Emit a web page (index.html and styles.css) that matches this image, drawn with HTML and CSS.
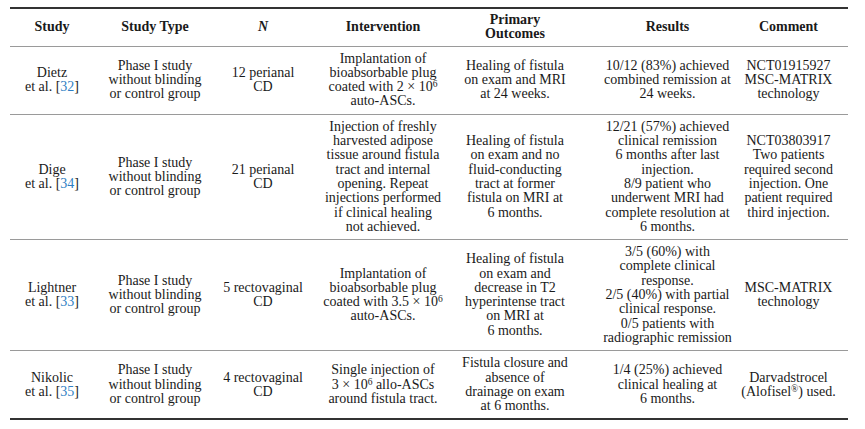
FILE: index.html
```html
<!DOCTYPE html>
<html lang="en">
<head>
<meta charset="utf-8">
<title>Table</title>
<link rel="stylesheet" href="styles.css">
</head>
<body>
<table class="tbl">
  <colgroup>
    <col class="c1"><col class="c2"><col class="c3"><col class="c4"><col class="c5"><col class="c6"><col class="c7">
  </colgroup>
  <thead>
    <tr>
      <th>Study</th>
      <th>Study Type</th>
      <th><em>N</em></th>
      <th>Intervention</th>
      <th>Primary<br>Outcomes</th>
      <th class="res">Results</th>
      <th class="last">Comment</th>
    </tr>
  </thead>
  <tbody>
    <tr>
      <td>Dietz<br>et al. [<a class="ref">32</a>]</td>
      <td>Phase I study<br>without blinding<br>or control group</td>
      <td>12 perianal<br>CD</td>
      <td>Implantation of<br>bioabsorbable plug<br>coated with 2 × 10<sup>6</sup><br>auto-ASCs.</td>
      <td>Healing of fistula<br>on exam and MRI<br>at 24 weeks.</td>
      <td class="res">10/12 (83%) achieved<br>combined remission at<br>24 weeks.</td>
      <td class="last">NCT01915927<br>MSC-MATRIX<br>technology</td>
    </tr>
    <tr>
      <td>Dige<br>et al. [<a class="ref">34</a>]</td>
      <td>Phase I study<br>without blinding<br>or control group</td>
      <td>21 perianal<br>CD</td>
      <td>Injection of freshly<br>harvested adipose<br>tissue around fistula<br>tract and internal<br>opening. Repeat<br>injections performed<br>if clinical healing<br>not achieved.</td>
      <td>Healing of fistula<br>on exam and no<br>fluid-conducting<br>tract at former<br>fistula on MRI at<br>6 months.</td>
      <td class="res">12/21 (57%) achieved<br>clinical remission<br>6 months after last<br>injection.<br>8/9 patient who<br>underwent MRI had<br>complete resolution at<br>6 months.</td>
      <td class="last">NCT03803917<br>Two patients<br>required second<br>injection. One<br>patient required<br>third injection.</td>
    </tr>
    <tr>
      <td>Lightner<br>et al. [<a class="ref">33</a>]</td>
      <td>Phase I study<br>without blinding<br>or control group</td>
      <td>5 rectovaginal<br>CD</td>
      <td>Implantation of<br>bioabsorbable plug<br>coated with 3.5 × 10<sup>6</sup><br>auto-ASCs.</td>
      <td>Healing of fistula<br>on exam and<br>decrease in T2<br>hyperintense tract<br>on MRI at<br>6 months.</td>
      <td class="res">3/5 (60%) with<br>complete clinical<br>response.<br>2/5 (40%) with partial<br>clinical response.<br>0/5 patients with<br>radiographic remission</td>
      <td class="last">MSC-MATRIX<br>technology</td>
    </tr>
    <tr>
      <td>Nikolic<br>et al. [<a class="ref">35</a>]</td>
      <td>Phase I study<br>without blinding<br>or control group</td>
      <td>4 rectovaginal<br>CD</td>
      <td>Single injection of<br>3 × 10<sup>6</sup> allo-ASCs<br>around fistula tract.</td>
      <td>Fistula closure and<br>absence of<br>drainage on exam<br>at 6 months.</td>
      <td class="res">1/4 (25%) achieved<br>clinical healing at<br>6 months.</td>
      <td class="last">Darvadstrocel<br>(Alofisel<sup>®</sup>) used.</td>
    </tr>
  </tbody>
</table>
</body>
</html>
```

FILE: styles.css
```css
html, body {
  margin: 0;
  padding: 0;
  background: #ffffff;
}
body {
  padding: 7px 0 0 10px;
  font-family: "Liberation Serif", "Times New Roman", serif;
  font-size: 14px;
  color: #1a1a1a;
}
.tbl {
  width: 838px;
  border-collapse: collapse;
  table-layout: fixed;
  border-top: 2px solid #333333;
  border-bottom: 2px solid #333333;
}
.c1 { width: 84px; }
.c2 { width: 122px; }
.c3 { width: 94px; }
.c4 { width: 146px; }
.c5 { width: 118px; }
.c6 { width: 161px; }
.c7 { width: 113px; }
.tbl th,
.tbl td {
  text-align: center;
  vertical-align: middle;
  white-space: nowrap;
  line-height: 14.3px;
  padding: 5px 1px;
}
.tbl th {
  font-weight: bold;
  padding: 4px 1px 4px;
  height: 28px;
}
.tbl thead tr {
  border-bottom: 1px solid #9a9a9a;
}
.tbl tbody tr + tr {
  border-top: 1px solid #9a9a9a;
}
.tbl .res {
  padding-left: 27px;
}
.tbl .last {
  padding-right: 7px;
}
.ref {
  color: #2f7fc4;
  text-decoration: none;
}
sup {
  font-size: 9.5px;
  line-height: 0;
  vertical-align: 4px;
}
em {
  font-style: italic;
}
```
